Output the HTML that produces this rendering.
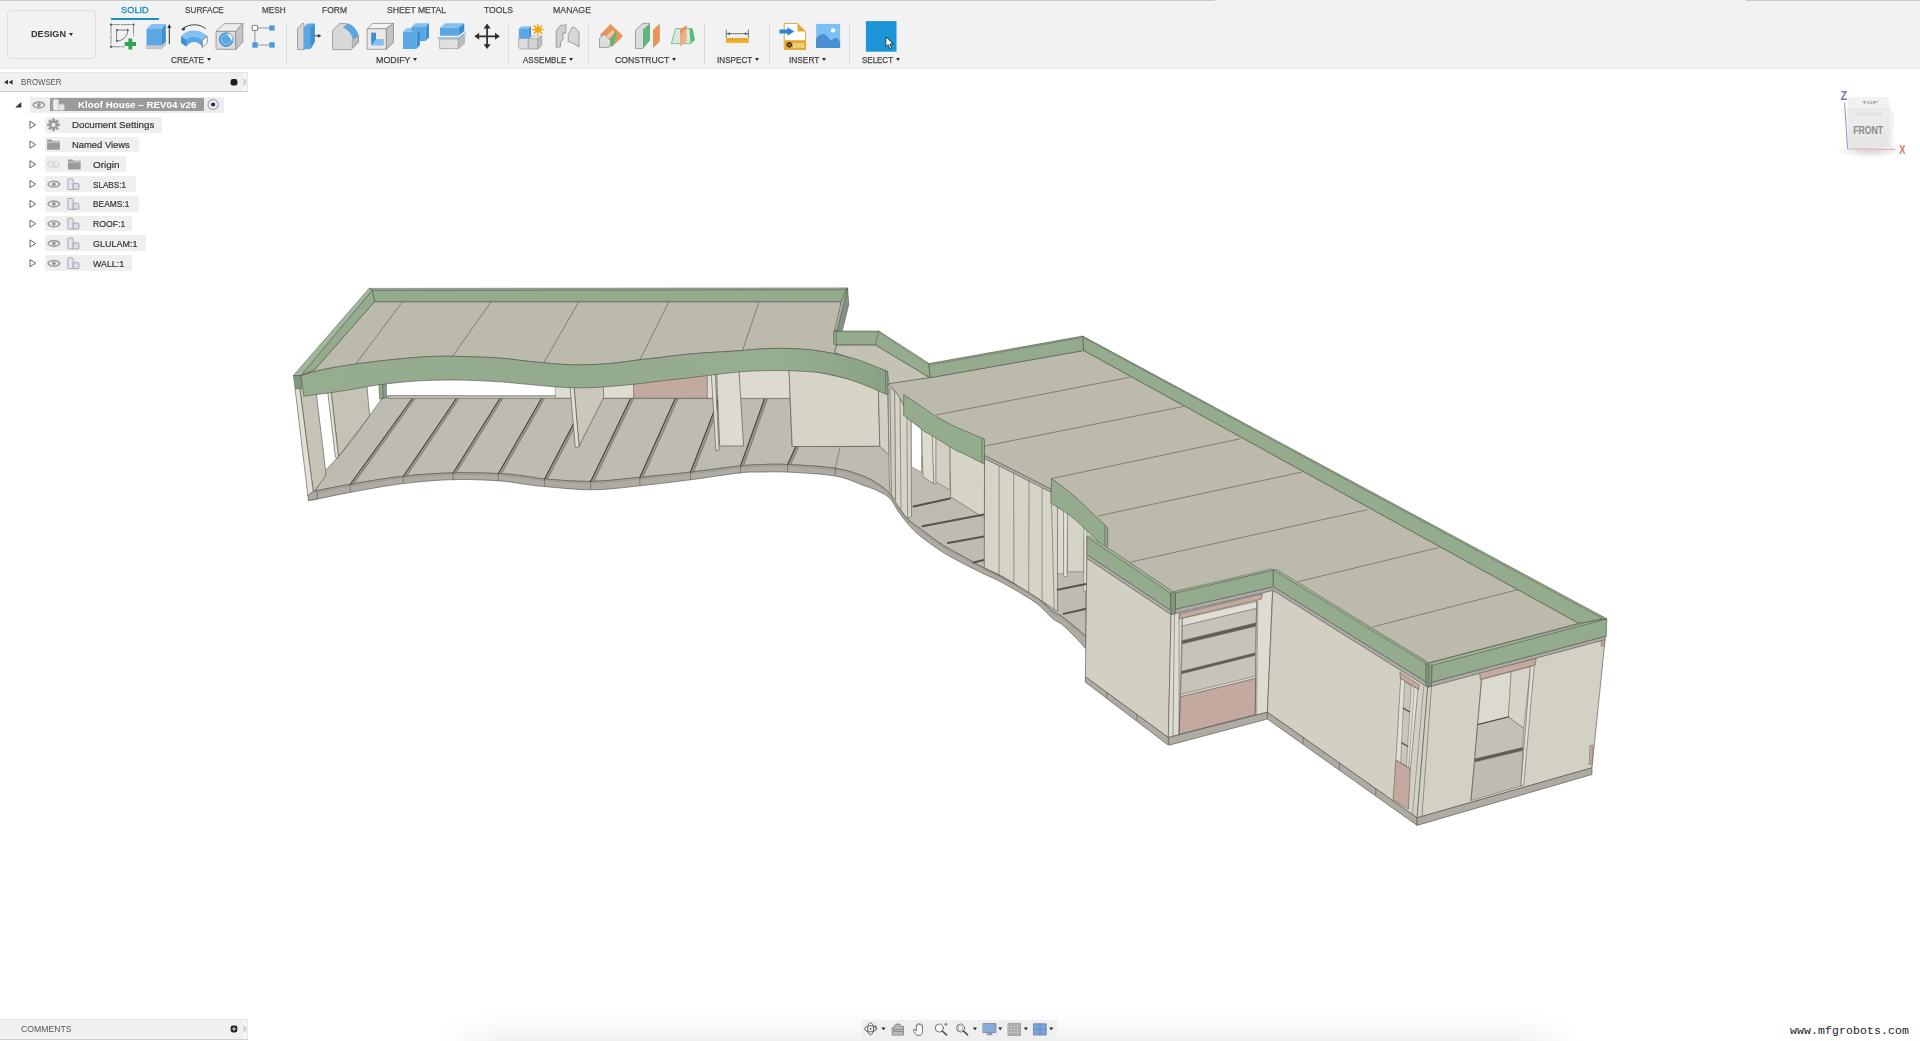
<!DOCTYPE html>
<html>
<head>
<meta charset="utf-8">
<title>Kloof House - Fusion 360</title>
<style>
*{box-sizing:border-box;margin:0;padding:0}
html,body{width:1920px;height:1041px;overflow:hidden;background:#fff;font-family:"Liberation Sans",sans-serif;color:#3c3c3c}
#app{position:relative;width:1920px;height:1041px;overflow:hidden;background:#fff}
.abs{position:absolute}
#topbar{left:0;top:0;width:1920px;height:69px;background:#f2f2f2;border-bottom:1px solid #ebebeb}
.topline{top:0;height:1px;background:#c9c9c9}
#design{left:7px;top:10px;width:89px;height:49px;border:1px solid #dedede;border-radius:4px;background:#f2f2f2}
.t{position:absolute;white-space:nowrap;line-height:1}
.sx{transform-origin:0 50%}
.tab{font-size:9.6px;color:#4a4a4a;top:5px;-webkit-text-stroke:0.25px #4a4a4a}
.grp{font-size:9.6px;color:#444;top:54.8px;-webkit-text-stroke:0.25px #444}
.sep{position:absolute;top:23px;width:1px;height:41px;background:#dadada}
.dd{position:absolute;width:0;height:0;border-left:2.2px solid transparent;border-right:2.2px solid transparent;border-top:3.2px solid #2a2a2a}
.arr{display:inline-block;width:0;height:0;border-left:2.5px solid transparent;border-right:2.5px solid transparent;border-top:3.5px solid #333;vertical-align:middle;margin-left:3px;position:relative;top:-1px}
#browserhdr{left:0;top:72px;width:247.6px;height:20px;background:#f0f0f0;border-bottom:1px solid #d0d0d0;border-top:1px solid #e6e6e6}
#commentsbar{left:0;top:1019px;width:247.6px;height:21px;background:#f0f0f0;border-bottom:1px solid #cfcfcf;border-top:1px solid #e6e6e6}
.row{position:absolute;height:17px;background:#efefef}
.rt{position:absolute;font-size:9.5px;color:#333;-webkit-text-stroke:0.2px #333;white-space:nowrap;line-height:1}
#navbar{left:862px;top:1020px;width:195px;height:20px;background:#efefef}
#wm{right:11px;top:1025px;font-family:"Liberation Mono",monospace;font-size:11.5px;color:#222;letter-spacing:0.1px}
svg{position:absolute;left:0;top:0;overflow:visible}
</style>
</head>
<body>
<div id="app">

<!-- ======= TOP TOOLBAR ======= -->
<div id="topbar" class="abs"></div>
<div class="abs topline" style="left:0;width:1215px"></div>
<div class="abs topline" style="left:1746px;width:174px"></div>
<div id="design" class="abs"></div>
<div class="t sx" style="transform:scaleX(0.9512);left:30.7px;top:29.3px;font-size:9.6px;font-weight:bold;color:#333">DESIGN</div>
<div class="dd" style="left:68.8px;top:33px"></div>

<div class="t tab sx" style="transform:scaleX(0.9654);left:120.7px;color:#1a8cc6;-webkit-text-stroke:0.3px #1a8cc6">SOLID</div>
<div class="abs" style="left:111px;top:17.5px;width:47.8px;height:2.3px;background:#1a8cc6"></div>
<div class="t tab sx" style="transform:scaleX(0.8563);left:185px">SURFACE</div>
<div class="t tab sx" style="transform:scaleX(0.8586);left:261.7px">MESH</div>
<div class="t tab sx" style="transform:scaleX(0.8850);left:322.2px">FORM</div>
<div class="t tab sx" style="transform:scaleX(0.8971);left:386.5px">SHEET METAL</div>
<div class="t tab sx" style="transform:scaleX(0.8962);left:484.2px">TOOLS</div>
<div class="t tab sx" style="transform:scaleX(0.9136);left:552.5px">MANAGE</div>

<div class="sep" style="left:286px"></div>
<div class="sep" style="left:508px"></div>
<div class="sep" style="left:588px"></div>
<div class="sep" style="left:704px"></div>
<div class="sep" style="left:769px"></div>
<div class="sep" style="left:849px"></div>

<div class="t grp sx" style="transform:scaleX(0.8638);left:170.7px">CREATE</div><div class="dd" style="left:207px;top:58px"></div>
<div class="t grp sx" style="transform:scaleX(0.9246);left:375.5px">MODIFY</div><div class="dd" style="left:412.5px;top:58px"></div>
<div class="t grp sx" style="transform:scaleX(0.8370);left:523px">ASSEMBLE</div><div class="dd" style="left:569.2px;top:58px"></div>
<div class="t grp sx" style="transform:scaleX(0.9015);left:614.5px">CONSTRUCT</div><div class="dd" style="left:671.6px;top:58px"></div>
<div class="t grp sx" style="transform:scaleX(0.8487);left:716.7px">INSPECT</div><div class="dd" style="left:755px;top:58px"></div>
<div class="t grp sx" style="transform:scaleX(0.8653);left:789px">INSERT</div><div class="dd" style="left:821.8px;top:58px"></div>
<div class="t grp sx" style="transform:scaleX(0.8305);left:862px">SELECT</div><div class="dd" style="left:895.6px;top:58px"></div>

<!-- TOOLBAR ICONS -->
<svg id="tbicons" width="1920" height="70" viewBox="0 0 1920 70">
<g stroke-linejoin="round" stroke-linecap="round">
<!-- 1 Create sketch -->
<g fill="none" stroke="#666" stroke-width="0.7">
<path d="M111,24.6 H133.5 M111,24.6 V46.8 M133.5,24.6 V36 M111,46.8 H124" stroke-dasharray="9 1.5"/>
<path d="M117,30 H127.8 C127.8,36 123,41 117,41 Z" stroke="#555" stroke-width="0.75"/>
</g>
<g fill="#555"><circle cx="111" cy="24.6" r="1.1"/><circle cx="133.5" cy="24.6" r="1.1"/><circle cx="111" cy="46.8" r="1.1"/><circle cx="117" cy="30" r="1"/><circle cx="127.8" cy="30" r="1"/><circle cx="117" cy="41" r="1"/></g>
<path d="M128.4,38.5 h3.8 v3.6 h3.8 v3.8 h-3.8 v3.7 h-3.8 v-3.7 h-3.7 v-3.8 h3.7 z" fill="#2da44e"/>
<!-- 2 Extrude -->
<polygon points="146.5,45.2 161.4,45.2 165.8,41.8 165.8,45 161.4,48.7 146.5,48.7" fill="#c9c9c9" stroke="#a8a8a8" stroke-width="0.5"/>
<polygon points="146.5,28.9 161.4,28.9 161.4,45.2 146.5,45.2" fill="#5aa7e3"/>
<polygon points="146.5,28.9 151.5,24 165.8,24 161.4,28.9" fill="#84c0f0"/>
<polygon points="161.4,28.9 165.8,24 165.8,41.8 161.4,45.2" fill="#3d8fd1"/>
<path d="M169.3,43.8 V26.5" stroke="#333" stroke-width="1" fill="none"/><polygon points="169.3,24 171.4,28 167.2,28" fill="#333"/>
<!-- 3 Revolve -->
<path d="M182.5,28.5 C190,23.5 199,23.5 205.3,28.3" fill="none" stroke="#333" stroke-width="0.9"/><polygon points="181,29.5 185.6,27 184.2,30.8" fill="#333"/>
<path d="M181.2,36.5 C187,29 199,29 207,36 L207.3,42.5 L202.5,47.3 C198,40.5 191,40.5 186.5,46.5 L181.2,43 Z" fill="#5aa7e3"/>
<path d="M181.2,36.5 C187,29 199,29 207,36 L202.3,40.8 C198,35.5 190,35.5 186.3,40 Z" fill="#84c0f0"/>
<path d="M181.2,36.5 L186.3,40 L186.5,46.5 L181.2,43 Z" fill="#3d8fd1"/>
<polygon points="202.3,40.8 207,36 207.3,42.5 202.5,47.3" fill="#fff" stroke="#666" stroke-width="0.7"/>
<!-- 4 Hole -->
<polygon points="216.5,31 236,31 236,49.3 216.5,49.3" fill="#dcdcdc" stroke="#8c8c8c" stroke-width="0.8"/>
<polygon points="216.5,31 224,23.6 242.8,23.6 236,31" fill="#ededed" stroke="#8c8c8c" stroke-width="0.8"/>
<polygon points="236,31 242.8,23.6 242.8,42 236,49.3" fill="#c4c4c4" stroke="#8c8c8c" stroke-width="0.8"/>
<circle cx="226.2" cy="39.6" r="6.8" fill="#5aa7e3" stroke="#3b82c4" stroke-width="0.9"/>
<circle cx="226.2" cy="39.6" r="5" fill="none" stroke="#9ccdf3" stroke-width="0.8"/>
<path d="M226.8,33.6 C230.8,33.8 233,36.8 232.6,41 C230.5,38.5 229,36.3 226.8,33.6 Z" fill="#fff"/>
<!-- 5 Pattern -->
<path d="M257.3,27.9 H269.2 M254.9,30.4 V42.2 M257.3,45 H269.2" stroke="#8a8a8a" stroke-width="0.9" fill="none"/>
<rect x="252.6" y="25.4" width="5" height="5" fill="#fff" stroke="#666" stroke-width="0.8"/>
<rect x="269.2" y="25.4" width="5.5" height="5.2" fill="#4f9cdc"/>
<rect x="252.3" y="42.2" width="5.5" height="5.5" fill="#4f9cdc"/>
<rect x="269.2" y="42.2" width="5.5" height="5.5" fill="#4f9cdc"/>
<!-- 6 Press pull -->
<path d="M297.6,49.2 V28.5 L302,23.6 H304 V49.2 Z" fill="#d6d6d6" stroke="#8c8c8c" stroke-width="0.8"/>
<path d="M303.8,49.2 V27.5 L307.5,23.6 H314.5 V41.5 L310,49.2 Z" fill="#5aa7e3"/>
<path d="M310.5,28 L314.8,23.6 V42 L310.5,49.2 Z" fill="#3d8fd1"/>
<path d="M314.8,35.8 H319" stroke="#333" stroke-width="0.9"/><polygon points="321.3,35.8 317.8,33.9 317.8,37.7" fill="#333"/>
<!-- 7 Fillet -->
<path d="M332.6,49.3 V30.5 L339.5,23.6 H345 C352,24.5 356,29 358.5,36 V42 L351.5,49.3 Z" fill="#d8d8d8" stroke="#8c8c8c" stroke-width="0.8"/>
<path d="M343,27.5 L347.5,23.4 C353,24.5 357,29.5 358.5,36 L352.8,39.5 C351.5,34 348.5,29.5 343,27.5 Z" fill="#5aa7e3"/>
<path d="M352.8,39.5 L358.5,36 V42 L352.5,47.5 Z" fill="#bdbdbd" stroke="#8c8c8c" stroke-width="0.6"/>
<!-- 8 Shell -->
<polygon points="367.5,28.5 386.5,28.5 386.5,49.3 367.5,49.3" fill="#e9e9e9" stroke="#8c8c8c" stroke-width="0.8"/>
<polygon points="367.5,28.5 372.5,23.4 393.5,23.4 386.5,28.5" fill="#f3f3f3" stroke="#8c8c8c" stroke-width="0.8"/>
<polygon points="386.5,28.5 393.5,23.4 393.5,42.5 386.5,49.3" fill="#c3c3c3" stroke="#8c8c8c" stroke-width="0.8"/>
<path d="M371.3,32.8 H376 V39 H383.8 V45.5 H371.3 Z" fill="#84c0f0"/>
<path d="M371.3,32.8 H376 V39 L371.3,45.5 Z" fill="#3d8fd1"/>
<!-- 9 Combine -->
<polygon points="403,31.8 416.5,31.8 416.5,49 403,49" fill="#5aa7e3"/>
<polygon points="403,31.8 406.5,28.2 420,28.2 416.5,31.8" fill="#84c0f0"/>
<polygon points="416.5,31.8 420,28.2 420,45 416.5,49" fill="#3d8fd1"/>
<polygon points="411.5,27 425.5,27 425.5,41 420,41 420,31.8 411.5,31.8" fill="#5aa7e3"/>
<polygon points="411.5,27 415,23.2 429,23.2 425.5,27" fill="#84c0f0"/>
<polygon points="425.5,27 429,23.2 429,37.2 425.5,41" fill="#3d8fd1"/>
<!-- 10 Split -->
<polygon points="440,39 458.5,39 458.5,48.6 440,48.6" fill="#e0e0e0" stroke="#9a9a9a" stroke-width="0.7"/>
<polygon points="458.5,39 464.3,35 464.3,43.5 458.5,48.6" fill="#bdbdbd" stroke="#9a9a9a" stroke-width="0.7"/>
<path d="M437.8,38 H459 L466,32.5" stroke="#4f9cdc" stroke-width="0.9" fill="none"/>
<polygon points="440,27.5 458.5,27.5 458.5,35.8 440,35.8" fill="#5aa7e3"/>
<polygon points="440,27.5 445.5,23.2 464.3,23.2 458.5,27.5" fill="#84c0f0"/>
<polygon points="458.5,27.5 464.3,23.2 464.3,31.2 458.5,35.8" fill="#3d8fd1"/>
<!-- 11 Move -->
<path d="M487.1,26 V46.5 M477,36.3 H497.3" stroke="#2f2f2f" stroke-width="1.7" fill="none"/>
<polygon points="487.1,23.5 490.6,28.4 483.6,28.4" fill="#2f2f2f"/><polygon points="487.1,49.1 490.6,44.2 483.6,44.2" fill="#2f2f2f"/>
<polygon points="474.3,36.3 479.2,32.8 479.2,39.8" fill="#2f2f2f"/><polygon points="499.9,36.3 495,32.8 495,39.8" fill="#2f2f2f"/>
<!-- 12 New component -->
<path d="M518.8,38.5 H528.5 V49 H521 C519.5,49 518.8,48 518.8,47 Z" fill="#dcdcdc" stroke="#9a9a9a" stroke-width="0.7"/>
<path d="M528.5,38.5 H538 V49 H528.5 Z" fill="#d2d2d2" stroke="#9a9a9a" stroke-width="0.7"/>
<path d="M528.5,38.5 L532,36 H541.8 L538,38.5 Z" fill="#ececec" stroke="#9a9a9a" stroke-width="0.6"/>
<path d="M538,38.5 L541.8,36 V45.5 L538,49 Z" fill="#bdbdbd" stroke="#9a9a9a" stroke-width="0.6"/>
<path d="M518.8,29 H528.5 V38.5 H518.8 Z" fill="#5aa7e3"/>
<path d="M518.8,29 L521.5,26.3 H531 L528.5,29 Z" fill="#84c0f0"/>
<path d="M528.5,29 L531,26.3 V36.5 L528.5,38.5 Z" fill="#3d8fd1"/>
<g stroke="#f5a100" stroke-width="1.3"><path d="M537.9,24.3 V34.7 M532.7,29.5 H543.1 M534.2,25.8 L541.6,33.2 M541.6,25.8 L534.2,33.2"/></g>
<circle cx="537.9" cy="29.5" r="2.9" fill="#f7a800"/>
<!-- 13 Joint -->
<path d="M556.2,46.8 V30.5 L560.5,25.5 H565.8 V33 H563 V39.5 L560.5,42.5 V46.8 L557.5,47.2 Z" fill="#cfcfcf" stroke="#8c8c8c" stroke-width="0.8"/>
<path d="M560.5,25.5 L563,24.8 H566.5 L565.8,26" fill="#e6e6e6" stroke="#8c8c8c" stroke-width="0.6"/>
<path d="M568.5,34 L572.5,27 L574.5,27.5 L579,31.5 V47 L573.5,43.5 L568.5,41.5 Z" fill="#d4d8dc" stroke="#8c8c8c" stroke-width="0.8"/>
<!-- 14 Offset plane -->
<polygon points="610.5,24 623,36 612,47 599.8,35" fill="#e8935a"/>
<polygon points="599.5,47 599.5,38.5 603.8,34 612,42 609,47" fill="#dcdcdc" stroke="#8c8c8c" stroke-width="0.8"/>
<polygon points="606,36.2 612.5,30 615,32.5 608.6,38.8" fill="#f1c9ab"/>
<polygon points="610,40 615.5,31 616.3,36.5 613,45 610,46.6" fill="#59b87a"/>
<!-- 15 plane at angle -->
<polygon points="635.5,48.2 635.5,30 643,23.3 649.5,23.3 649.5,40 643,48.2" fill="#dcdcdc" stroke="#8c8c8c" stroke-width="0.8"/>
<polygon points="643,29.5 649.8,23.5 649.8,40.5 643,48" fill="#59b87a"/>
<polygon points="653,30 659.8,23.5 659.8,41.5 653,48" fill="#e8935a"/>
<!-- 16 -->
<polygon points="671.5,43.3 675.5,28.5 692,28.5 694.5,40 691,43.3" fill="#dfe5df" stroke="#59b87a" stroke-width="0.8"/>
<polygon points="689.5,29 692.2,28.5 694.8,40 690.5,43" fill="#59b87a"/>
<polygon points="680,30 686.5,25.3 686.5,41.5 680,46.8" fill="#ecab7e" opacity="0.92"/>
<polygon points="680,30 686.5,25.3 686.5,29 680,34" fill="#e8935a"/>
<!-- 17 Measure -->
<rect x="725.9" y="38.2" width="22.9" height="4.8" fill="#f0b429"/>
<path d="M728,38.2 v1.8 M730.3,38.2 v1.8 M732.6,38.2 v1.8 M734.9,38.2 v1.8 M737.2,38.2 v1.8 M739.5,38.2 v1.8 M741.8,38.2 v1.8 M744.1,38.2 v1.8 M746.4,38.2 v1.8" stroke="#b27d10" stroke-width="0.6"/>
<path d="M726.3,30 V37.5 M748.4,30 V37.5 M727,33.7 H747.8" stroke="#555" stroke-width="0.8" fill="none"/>
<polygon points="726.8,33.7 730,32.3 730,35.1" fill="#555"/><polygon points="748,33.7 744.8,32.3 744.8,35.1" fill="#555"/>
<!-- 18 Insert SVG -->
<path d="M784.6,23.4 H797.5 L805.6,31.5 V49.4 H784.6 Z" fill="#fff" stroke="#c9962a" stroke-width="0.8"/>
<polygon points="797.5,23.4 805.6,31.5 797.5,31.5" fill="#e3a82c"/>
<rect x="784.6" y="40.2" width="21" height="9.2" fill="#e3a82c"/>
<circle cx="789.3" cy="44.8" r="2.7" fill="#3a2a08"/><path d="M788.1,43.6 l2.4,2.4 m0,-2.4 l-2.4,2.4" stroke="#e3a82c" stroke-width="0.8"/>
<text x="793" y="47.6" font-family="Liberation Sans, sans-serif" font-weight="bold" font-size="6.6" fill="#fff2cc" textLength="11.5" lengthAdjust="spacingAndGlyphs">SVG</text>
<path d="M779.5,29.6 H787.5 V27.3 L794.3,31.5 L787.5,35.7 V33.4 H779.5 Z" fill="#2c86d3"/>
<!-- 19 Image -->
<rect x="816.1" y="23.9" width="24" height="24" fill="#7cc0f3"/>
<path d="M816.1,47.9 V38.5 C819,35 822,33.5 824.5,34.3 C827,35.3 829,39 831,40.5 C833,39.5 834.5,37.5 836,37.8 C837.8,38.2 839,40.5 840.1,42.5 V47.9 Z" fill="#4a90d0"/>
<circle cx="833" cy="30.4" r="2.2" fill="#fff"/>
<!-- 20 Select -->
<rect x="865.9" y="21.1" width="30.6" height="30.6" fill="#1b95d7"/>
<path d="M885.9,37.3 L885.9,46.8 L888.2,44.6 L889.9,48.6 L891.6,47.9 L889.9,44 L893,43.8 Z" fill="#fff" stroke="#222" stroke-width="0.8"/>
</g>

</svg>

<!-- ======= BROWSER ======= -->
<div id="browserhdr" class="abs"></div>
<div class="t sx" style="transform:scaleX(0.8707);left:20.8px;top:77.6px;font-size:9px;color:#555">BROWSER</div>
<div id="tree">
<div class="row" style="left:30px;top:96.5px;width:194px;height:16px;background:#ededed"></div>
<div class="row" style="left:50.3px;top:98.2px;width:153.3px;height:13px;background:#9b9b9b"></div>
<div class="row" style="left:44.9px;top:116.8px;width:116.8px;height:15.8px"></div>
<div class="row" style="left:44.9px;top:136.5px;width:94.1px;height:15.8px"></div>
<div class="row" style="left:44.9px;top:156.3px;width:80.9px;height:15.8px"></div>
<div class="row" style="left:44.9px;top:176.1px;width:91.1px;height:15.8px"></div>
<div class="row" style="left:44.9px;top:195.9px;width:94.3px;height:15.8px"></div>
<div class="row" style="left:44.9px;top:215.7px;width:87.6px;height:15.8px"></div>
<div class="row" style="left:44.9px;top:235.4px;width:100.7px;height:15.8px"></div>
<div class="row" style="left:44.9px;top:255.2px;width:87.6px;height:15.8px"></div>
<div class="rt sx" style="transform:scaleX(1.0423);left:78.1px;top:100.3px;font-weight:bold;color:#fff;font-size:9.4px;-webkit-text-stroke:0">Kloof House – REV04 v26</div>
<div class="rt sx" style="transform:scaleX(1.0253);left:72.2px;top:120.1px">Document Settings</div>
<div class="rt sx" style="transform:scaleX(0.9891);left:72.2px;top:139.9px">Named Views</div>
<div class="rt sx" style="transform:scaleX(1.0417);left:92.8px;top:159.7px">Origin</div>
<div class="rt sx" style="transform:scaleX(0.8558);left:92.8px;top:179.5px">SLABS:1</div>
<div class="rt sx" style="transform:scaleX(0.8813);left:92.8px;top:199.3px">BEAMS:1</div>
<div class="rt sx" style="transform:scaleX(0.9102);left:92.8px;top:219.1px">ROOF:1</div>
<div class="rt sx" style="transform:scaleX(0.9447);left:92.8px;top:238.8px">GLULAM:1</div>
<div class="rt sx" style="transform:scaleX(0.9326);left:92.8px;top:258.6px">WALL:1</div>
<svg width="260" height="290" viewBox="0 0 260 290">
<defs>
<g id="eye"><path d="M-6,0 C-3.5,-4 3.5,-4 6,0 C3.5,4 -3.5,4 -6,0 Z" fill="none" stroke="#9a9a9a" stroke-width="1.3"/><circle r="1.9" fill="#9a9a9a"/></g>
<g id="comp"><path d="M-5,-5.4 h3.2 q1,0 1,1 v9.8 h-4.6 q-0.8,0 -0.8,-0.8 v-9 q0,-1 1.2,-1 z" fill="#e4e4ea" stroke="#9a9aa6" stroke-width="0.8"/><path d="M-0.8,-0.6 h4.6 q1.2,0 1.2,1.2 v3.8 q0,1 -1,1 h-4.8 z" fill="#dcdce4" stroke="#9a9aa6" stroke-width="0.8"/></g>
<g id="tri"><path d="M-2.6,-3.6 L3,0 L-2.6,3.6 Z" fill="#fff" stroke="#555" stroke-width="0.9" stroke-linejoin="round"/></g>
<g id="folder"><path d="M-6.4,-5 h4.6 l1,1.4 h7.2 v8.7 h-12.8 z" fill="#9a9a9a"/><path d="M-6.4,-2.4 h12.8" stroke="#efefef" stroke-width="0.7"/></g>
</defs>
<path d="M15.2,107.4 L21.3,107.4 L21.3,102 Z" fill="#333"/>
<use href="#eye" x="38.9" y="105"/>
<g transform="translate(59.3,104.8)"><path d="M-5,-5.4 h3.2 q1,0 1,1 v9.8 h-4.6 q-0.8,0 -0.8,-0.8 v-9 q0,-1 1.2,-1 z" fill="#ececf0" stroke="#c6c6ce" stroke-width="0.7"/><path d="M-0.8,-0.6 h4.6 q1.2,0 1.2,1.2 v3.8 q0,1 -1,1 h-4.8 z" fill="#e4e4ea" stroke="#c6c6ce" stroke-width="0.7"/></g>
<circle cx="213.1" cy="104.5" r="5" fill="#f2f3f8" stroke="#aeb2c2" stroke-width="1.5"/><circle cx="213.1" cy="104.5" r="2.1" fill="#2b2f45"/>
<use href="#tri" x="32.6" y="124.8"/><use href="#tri" x="32.6" y="144.6"/><use href="#tri" x="32.6" y="164.3"/><use href="#tri" x="32.6" y="184.1"/><use href="#tri" x="32.6" y="203.9"/><use href="#tri" x="32.6" y="223.7"/><use href="#tri" x="32.6" y="243.5"/><use href="#tri" x="32.6" y="263.2"/>
<!-- gear -->
<g transform="translate(53.5,124.8)" fill="#9a9a9a"><circle r="4.3"/><g><rect x="-1.3" y="-6.4" width="2.6" height="12.8"/><rect x="-1.3" y="-6.4" width="2.6" height="12.8" transform="rotate(45)"/><rect x="-1.3" y="-6.4" width="2.6" height="12.8" transform="rotate(90)"/><rect x="-1.3" y="-6.4" width="2.6" height="12.8" transform="rotate(135)"/></g><circle r="2.1" fill="#efefef"/></g>
<use href="#folder" x="53.5" y="144.6"/>
<g opacity="0.28"><use href="#eye" x="53.4" y="164.3"/><path d="M48.5,160.3 L58.5,168.3" stroke="#9a9a9a" stroke-width="1"/></g>
<use href="#folder" x="74.3" y="164.4"/>
<use href="#eye" x="53.9" y="184.2"/><use href="#comp" x="74" y="184.1"/>
<use href="#eye" x="53.9" y="204"/><use href="#comp" x="74" y="203.9"/>
<use href="#eye" x="53.9" y="223.8"/><use href="#comp" x="74" y="223.7"/>
<use href="#eye" x="53.9" y="243.5"/><use href="#comp" x="74" y="243.5"/>
<use href="#eye" x="53.9" y="263.3"/><use href="#comp" x="74" y="263.2"/>
<!-- header icons -->
<path d="M8,79.8 L4,82.2 L8,84.6 Z M12.6,79.8 L8.6,82.2 L12.6,84.6 Z" fill="#333"/>
<rect x="230.6" y="79" width="6.8" height="6.4" rx="2.2" fill="#1e1e1e"/>
<rect x="243.2" y="73" width="4" height="18" fill="#f6f6f6"/><path d="M243.6,77.5 L246.6,82 L243.6,86.5 Z" fill="#c9c9c9"/><path d="M247.2,73 V91" stroke="#dcdcdc" stroke-width="0.6"/>
</svg>

</div>

<!-- ======= MODEL ======= -->
<svg id="model" width="1920" height="1041" viewBox="0 0 1920 1041">
<path d="M382,398.5 L387.9,396 L790,398.4 L792.2,446.5 L879.8,446.3 L889.8,440 L1086,540 L1086,636.5 C1084.2,634.9 1079.0,630.3 1075.0,627.0 C1071.0,623.7 1065.8,619.2 1062.0,616.5 C1058.2,613.8 1057.0,614.4 1052.5,611.0 C1048.0,607.6 1043.3,601.8 1035.0,596.2 C1026.7,590.7 1011.0,582.2 1002.5,577.5 C994.0,572.8 990.2,571.3 984.0,568.0 C977.8,564.7 972.1,561.5 965.3,557.7 C958.5,553.9 950.4,550.0 943.0,545.2 C935.6,540.4 926.7,533.5 920.7,529.0 C914.7,524.5 910.7,522.1 906.9,518.3 C903.1,514.5 900.8,510.1 898.0,506.0 C895.2,501.9 893.3,497.4 890.0,493.7 C886.7,490.0 882.5,486.9 878.0,484.0 C873.5,481.1 870.0,478.6 862.9,476.0 C855.8,473.4 847.8,470.2 835.3,468.3 C822.8,466.4 800.1,465.1 787.6,464.5 C775.1,463.9 768.0,464.4 760.0,464.6 C752.0,464.9 751.3,464.8 739.7,466.0 C728.1,467.2 707.4,470.2 690.5,472.1 C673.6,474.0 654.7,475.9 638.3,477.5 C621.9,479.1 607.6,481.1 592.2,481.4 C576.8,481.7 557.3,480.0 546.1,479.1 C534.9,478.2 532.7,477.1 525.0,476.2 C517.3,475.3 512.0,474.2 500.0,473.6 C488.0,473.1 469.2,472.5 453.1,472.9 C437.0,473.3 420.5,474.3 403.3,476.2 C386.1,478.1 364.9,481.8 350.2,484.3 C335.5,486.8 321.1,489.9 315.3,491.0 L325.6,470.6 L339.3,455.6 L352.3,440 L369.6,415.7 Z" fill="#bebbb0" stroke="#4f4f48" stroke-width="0.6"/>
<path d="M315.3,491.0 C321.1,489.9 335.5,486.8 350.2,484.3 C364.9,481.8 386.1,478.1 403.3,476.2 C420.5,474.3 437.0,473.3 453.1,472.9 C469.2,472.5 488.0,473.1 500.0,473.6 C512.0,474.2 517.3,475.3 525.0,476.2 C532.7,477.1 534.9,478.2 546.1,479.1 C557.3,480.0 576.8,481.7 592.2,481.4 C607.6,481.1 621.9,479.1 638.3,477.5 C654.7,475.9 673.6,474.0 690.5,472.1 C707.4,470.2 728.1,467.2 739.7,466.0 C751.3,464.8 752.0,464.9 760.0,464.6 C768.0,464.4 775.1,463.9 787.6,464.5 C800.1,465.1 822.8,466.4 835.3,468.3 C847.8,470.2 855.8,473.4 862.9,476.0 C870.0,478.6 873.5,481.1 878.0,484.0 C882.5,486.9 886.7,490.0 890.0,493.7 C893.3,497.4 895.2,501.9 898.0,506.0 C900.8,510.1 903.1,514.5 906.9,518.3 C910.7,522.1 914.7,524.5 920.7,529.0 C926.7,533.5 935.6,540.4 943.0,545.2 C950.4,550.0 958.5,553.9 965.3,557.7 C972.1,561.5 977.8,564.7 984.0,568.0 C990.2,571.3 994.0,572.8 1002.5,577.5 C1011.0,582.2 1026.7,590.7 1035.0,596.2 C1043.3,601.8 1048.0,607.6 1052.5,611.0 C1057.0,614.4 1058.2,613.8 1062.0,616.5 C1065.8,619.2 1071.0,623.7 1075.0,627.0 C1079.0,630.3 1084.2,634.9 1086.0,636.5 L1086.0,649.0 C1084.2,647.0 1079.0,641.1 1075.0,637.0 C1071.0,632.9 1065.8,627.6 1062.0,624.5 C1058.2,621.4 1056.9,622.2 1052.5,618.5 C1048.1,614.8 1043.5,608.3 1035.4,602.5 C1027.3,596.7 1012.5,588.3 1003.8,583.5 C995.1,578.7 989.5,576.7 983.0,573.5 C976.5,570.3 971.8,568.1 965.0,564.5 C958.2,560.9 950.0,556.9 942.4,552.0 C934.8,547.1 925.0,540.0 919.2,535.2 C913.4,530.5 911.0,527.5 907.5,523.5 C904.0,519.5 900.9,515.2 898.0,511.0 C895.1,506.8 893.3,501.8 890.0,498.5 C886.7,495.2 882.5,493.2 878.0,491.0 C873.5,488.8 870.0,487.7 862.9,485.2 C855.8,482.7 847.8,478.2 835.3,476.0 C822.8,473.8 800.1,472.8 787.6,472.1 C775.1,471.5 768.0,472.0 760.0,472.1 C752.0,472.2 751.3,471.6 739.7,472.9 C728.1,474.2 707.4,477.6 690.5,479.8 C673.6,482.0 654.7,484.3 638.3,486.0 C621.9,487.7 607.6,489.7 592.2,489.8 C576.8,489.9 557.3,487.6 546.1,486.7 C534.9,485.8 532.7,485.3 525.0,484.3 C517.3,483.3 512.0,481.7 500.0,480.9 C488.0,480.1 469.2,479.2 453.1,479.6 C437.0,480.1 420.5,481.5 403.3,483.6 C386.1,485.7 364.5,489.8 350.2,492.4 C335.9,495.0 324.2,497.7 317.3,499.0 C310.4,500.3 310.0,500.2 308.5,500.4 Z" fill="#adaba3" stroke="#4f4f48" stroke-width="0.6" stroke-linejoin="round" />
<path d="M315.3,492.6 C321.1,491.5 335.5,488.4 350.2,485.9 C364.9,483.4 386.1,479.7 403.3,477.8 C420.5,475.9 437.0,474.9 453.1,474.5 C469.2,474.1 488.0,474.7 500.0,475.2 C512.0,475.8 517.3,476.9 525.0,477.8 C532.7,478.7 534.9,479.8 546.1,480.7 C557.3,481.6 576.8,483.3 592.2,483.0 C607.6,482.7 621.9,480.7 638.3,479.1 C654.7,477.6 673.6,475.6 690.5,473.7 C707.4,471.8 728.1,468.9 739.7,467.6 C751.3,466.4 752.0,466.5 760.0,466.2 C768.0,466.0 775.1,465.5 787.6,466.1 C800.1,466.7 822.8,468.0 835.3,469.9 C847.8,471.8 855.8,475.0 862.9,477.6 C870.0,480.2 873.5,482.7 878.0,485.6 C882.5,488.6 886.7,491.6 890.0,495.3 C893.3,499.0 895.2,503.5 898.0,507.6 C900.8,511.7 903.1,516.1 906.9,519.9 C910.7,523.7 914.7,526.1 920.7,530.6 C926.7,535.1 935.6,542.0 943.0,546.8 C950.4,551.6 958.5,555.5 965.3,559.3 C972.1,563.1 977.8,566.3 984.0,569.6 C990.2,572.9 994.0,574.4 1002.5,579.1 C1011.0,583.8 1026.7,592.3 1035.0,597.9 C1043.3,603.4 1048.0,609.2 1052.5,612.6 C1057.0,616.0 1058.2,615.4 1062.0,618.1 C1065.8,620.8 1071.0,625.3 1075.0,628.6 C1079.0,631.9 1084.2,636.5 1086.0,638.1" fill="none" stroke="#8a8980" stroke-width="0.5"/>
<polygon points="307.9,494.4 315.3,491.0 317.3,493.0 317.3,499.0 308.5,500.4" fill="#adaba3" stroke="#4f4f48" stroke-width="0.6" stroke-linejoin="round" />
<polygon points="414.1,396.0 417.1,396.0 353.2,484.5 350.2,484.3" fill="#96948b" stroke="#5c5b54" stroke-width="0.5" stroke-linejoin="round" />
<polyline points="414.1,396.0 350.2,484.3" fill="none" stroke="#3f3f39" stroke-width="1.0" stroke-linecap="round" stroke-linejoin="round" />
<polyline points="350.2,484.3 350.2,491.6" fill="none" stroke="#4f4f48" stroke-width="0.5" stroke-linecap="round" stroke-linejoin="round" />
<polygon points="457.8,396.2 460.8,396.2 406.3,476.4 403.3,476.2" fill="#96948b" stroke="#5c5b54" stroke-width="0.5" stroke-linejoin="round" />
<polyline points="457.8,396.2 403.3,476.2" fill="none" stroke="#3f3f39" stroke-width="1.0" stroke-linecap="round" stroke-linejoin="round" />
<polyline points="403.3,476.2 403.3,483.5" fill="none" stroke="#4f4f48" stroke-width="0.5" stroke-linecap="round" stroke-linejoin="round" />
<polygon points="500.8,396.9 503.8,396.9 456.1,473.1 453.1,472.9" fill="#96948b" stroke="#5c5b54" stroke-width="0.5" stroke-linejoin="round" />
<polyline points="500.8,396.9 453.1,472.9" fill="none" stroke="#3f3f39" stroke-width="1.0" stroke-linecap="round" stroke-linejoin="round" />
<polyline points="453.1,472.9 453.1,480.2" fill="none" stroke="#4f4f48" stroke-width="0.5" stroke-linecap="round" stroke-linejoin="round" />
<polygon points="541.5,398.4 544.5,398.4 501.3,473.8 498.3,473.6" fill="#96948b" stroke="#5c5b54" stroke-width="0.5" stroke-linejoin="round" />
<polyline points="541.5,398.4 498.3,473.6" fill="none" stroke="#3f3f39" stroke-width="1.0" stroke-linecap="round" stroke-linejoin="round" />
<polyline points="498.3,473.6 498.3,480.9" fill="none" stroke="#4f4f48" stroke-width="0.5" stroke-linecap="round" stroke-linejoin="round" />
<polygon points="587.0,398.0 590.0,398.0 547.6,479.0 544.6,478.8" fill="#96948b" stroke="#5c5b54" stroke-width="0.5" stroke-linejoin="round" />
<polyline points="587.0,398.0 544.6,478.8" fill="none" stroke="#3f3f39" stroke-width="1.0" stroke-linecap="round" stroke-linejoin="round" />
<polyline points="544.6,478.8 544.6,486.1" fill="none" stroke="#4f4f48" stroke-width="0.5" stroke-linecap="round" stroke-linejoin="round" />
<polygon points="630.6,398.4 633.6,398.4 593.7,481.6 590.7,481.4" fill="#96948b" stroke="#5c5b54" stroke-width="0.5" stroke-linejoin="round" />
<polyline points="630.6,398.4 590.7,481.4" fill="none" stroke="#3f3f39" stroke-width="1.0" stroke-linecap="round" stroke-linejoin="round" />
<polyline points="590.7,481.4 590.7,488.7" fill="none" stroke="#4f4f48" stroke-width="0.5" stroke-linecap="round" stroke-linejoin="round" />
<polygon points="675.2,398.4 678.2,398.4 642.8,477.6 639.8,477.4" fill="#96948b" stroke="#5c5b54" stroke-width="0.5" stroke-linejoin="round" />
<polyline points="675.2,398.4 639.8,477.4" fill="none" stroke="#3f3f39" stroke-width="1.0" stroke-linecap="round" stroke-linejoin="round" />
<polyline points="639.8,477.4 639.8,484.7" fill="none" stroke="#4f4f48" stroke-width="0.5" stroke-linecap="round" stroke-linejoin="round" />
<polygon points="719.1,398.0 722.1,398.0 693.5,472.3 690.5,472.1" fill="#96948b" stroke="#5c5b54" stroke-width="0.5" stroke-linejoin="round" />
<polyline points="719.1,398.0 690.5,472.1" fill="none" stroke="#3f3f39" stroke-width="1.0" stroke-linecap="round" stroke-linejoin="round" />
<polyline points="690.5,472.1 690.5,479.4" fill="none" stroke="#4f4f48" stroke-width="0.5" stroke-linecap="round" stroke-linejoin="round" />
<polygon points="764.6,398.4 767.6,398.4 743.5,466.2 740.5,466.0" fill="#96948b" stroke="#5c5b54" stroke-width="0.5" stroke-linejoin="round" />
<polyline points="764.6,398.4 740.5,466.0" fill="none" stroke="#3f3f39" stroke-width="1.0" stroke-linecap="round" stroke-linejoin="round" />
<polyline points="740.5,466.0 740.5,473.3" fill="none" stroke="#4f4f48" stroke-width="0.5" stroke-linecap="round" stroke-linejoin="round" />
<polygon points="795.8,446.5 798.8,446.5 790.6,464.7 787.6,464.5" fill="#96948b" stroke="#5c5b54" stroke-width="0.5" stroke-linejoin="round" />
<polyline points="795.8,446.5 787.6,464.5" fill="none" stroke="#3f3f39" stroke-width="1.0" stroke-linecap="round" stroke-linejoin="round" />
<polyline points="787.6,464.5 787.6,471.8" fill="none" stroke="#4f4f48" stroke-width="0.5" stroke-linecap="round" stroke-linejoin="round" />
<polyline points="839.9,447.6 835.3,468.3 835.3,476.0" fill="none" stroke="#4f4f48" stroke-width="0.5" stroke-linecap="round" stroke-linejoin="round" />
<polygon points="387.9,395.5 790.0,395.5 790.0,398.6 387.9,398.6" fill="#bbb9ae" stroke="#4f4f48" stroke-width="0.4" stroke-linejoin="round" />
<polygon points="555.3,378.0 633.7,378.0 633.7,398.1 555.3,398.1" fill="#deddd1" stroke="#4f4f48" stroke-width="0.4" stroke-linejoin="round" />
<polygon points="633.7,376.0 707.4,372.0 707.4,398.1 633.7,398.1" fill="#c3a9a0" stroke="#4f4f48" stroke-width="0.4" stroke-linejoin="round" />
<polygon points="707.4,372.0 716.7,372.0 716.7,398.1 707.4,398.1" fill="#e2e0d5" stroke="#4f4f48" stroke-width="0.4" stroke-linejoin="round" />
<polygon points="738.9,368.0 789.2,368.0 790.0,398.4 738.9,398.4" fill="#dddbcf" stroke="#4f4f48" stroke-width="0.5" stroke-linejoin="round" />
<polygon points="788.8,366.0 878.3,385.0 879.8,446.3 792.2,446.5" fill="#d6d3c7" stroke="#4f4f48" stroke-width="0.6" stroke-linejoin="round" />
<polygon points="878.3,385.0 887.5,390.0 889.3,455.5 879.8,446.3" fill="#d2cfc3" stroke="#4f4f48" stroke-width="0.6" stroke-linejoin="round" />
<polygon points="299.8,388.0 315.9,390.0 325.6,470.6 325.6,475.6 315.0,490.5 313.2,491.0" fill="#c6c3b7" stroke="#4f4f48" stroke-width="0.6" stroke-linejoin="round" />
<polygon points="295.1,388.8 299.8,388.8 313.2,491.0 307.9,495.7" fill="#e2e0d5" stroke="#4f4f48" stroke-width="0.6" stroke-linejoin="round" />
<polygon points="330.7,388.0 366.7,383.0 369.6,415.7 338.6,456.5" fill="#c5c2b6" stroke="#4f4f48" stroke-width="0.6" stroke-linejoin="round" />
<polygon points="327.4,389.0 330.7,388.0 338.6,458.0 335.4,457.4" fill="#e2e0d5" stroke="#4f4f48" stroke-width="0.6" stroke-linejoin="round" />
<polygon points="378.8,382.0 382.6,382.0 382.8,399.0 379.6,399.0" fill="#8fa98a" stroke="#4f4f48" stroke-width="0.5" stroke-linejoin="round" />
<polygon points="382.9,382.0 386.3,382.0 386.5,397.9 383.2,398.3" fill="#86a082" stroke="#4f4f48" stroke-width="0.5" stroke-linejoin="round" />
<polygon points="573.8,385.0 603.3,385.0 603.7,397.6 579.1,446.0" fill="#cac7bb" stroke="#4f4f48" stroke-width="0.6" stroke-linejoin="round" />
<polygon points="569.9,385.0 573.8,385.0 579.1,446.8 575.3,447.6" fill="#e2e0d5" stroke="#4f4f48" stroke-width="0.6" stroke-linejoin="round" />
<polygon points="716.7,372.0 738.9,370.0 743.6,446.0 719.7,446.0" fill="#dddbcf" stroke="#4f4f48" stroke-width="0.6" stroke-linejoin="round" />
<polygon points="711.3,373.0 715.1,373.0 719.0,450.0 715.9,450.9" fill="#e2e0d5" stroke="#4f4f48" stroke-width="0.6" stroke-linejoin="round" />
<path d="M374.5,301.7 L841.3,301.7 L836.7,345.5 L834.4,352.4 L887.5,371.5 C884.8,370.4 875.6,366.4 871.0,364.6 C866.4,362.8 863.8,361.8 860.0,360.5 C856.2,359.2 852.5,358.1 848.0,356.9 C843.5,355.7 838.2,354.5 833.0,353.5 C827.8,352.5 822.5,351.4 817.0,350.7 C811.5,349.9 806.5,349.4 800.0,349.0 C793.5,348.6 784.7,348.4 778.0,348.4 C771.3,348.4 766.3,348.6 760.0,349.0 C753.7,349.4 748.3,350.1 740.0,350.7 C731.7,351.3 719.3,351.9 710.0,352.5 C700.7,353.1 692.3,353.8 684.0,354.6 C675.7,355.4 667.7,356.6 660.0,357.5 C652.3,358.4 645.5,359.1 638.0,360.0 C630.5,360.9 622.7,362.2 615.0,363.0 C607.3,363.8 599.5,364.3 592.0,364.6 C584.5,364.9 577.7,365.1 570.0,364.8 C562.3,364.5 552.7,363.6 546.0,363.0 C539.3,362.4 537.7,362.3 530.0,361.5 C522.3,360.7 510.0,358.9 500.0,358.1 C490.0,357.3 479.2,357.1 470.0,356.8 C460.8,356.5 453.7,356.1 445.0,356.2 C436.3,356.3 430.0,356.4 418.0,357.3 C406.0,358.2 387.8,360.0 373.0,361.8 C358.2,363.6 341.0,366.1 329.0,368.4 C317.0,370.7 305.7,374.3 301.0,375.5 L314.8,369.5 Z" fill="#bcb9ad" stroke="#4f4f48" stroke-width="0.6"/>
<polyline points="402.5,301.7 355.0,365.0" fill="none" stroke="#4f4f48" stroke-width="0.55" stroke-linecap="round" stroke-linejoin="round" />
<polyline points="491.2,301.7 452.5,356.3" fill="none" stroke="#4f4f48" stroke-width="0.55" stroke-linecap="round" stroke-linejoin="round" />
<polyline points="578.8,301.7 543.8,362.7" fill="none" stroke="#4f4f48" stroke-width="0.55" stroke-linecap="round" stroke-linejoin="round" />
<polyline points="668.8,301.7 640.0,359.8" fill="none" stroke="#4f4f48" stroke-width="0.55" stroke-linecap="round" stroke-linejoin="round" />
<polyline points="759.0,301.7 742.5,350.6" fill="none" stroke="#4f4f48" stroke-width="0.55" stroke-linecap="round" stroke-linejoin="round" />
<polygon points="372.3,290.0 846.5,289.5 841.3,301.7 374.5,301.7" fill="#94ac8d" stroke="#4f4f48" stroke-width="0.6" stroke-linejoin="round" />
<polygon points="369.0,288.4 847.6,287.9 846.5,289.7 372.3,290.2" fill="#a0b79a" stroke="#4f4f48" stroke-width="0.5" stroke-linejoin="round" />
<polygon points="372.3,290.0 374.5,301.7 314.8,369.5 300.9,375.5" fill="#94ac8d" stroke="#4f4f48" stroke-width="0.6" stroke-linejoin="round" />
<polygon points="369.0,288.4 372.3,290.0 300.9,375.5 293.4,375.5" fill="#a0b79a" stroke="#4f4f48" stroke-width="0.5" stroke-linejoin="round" />
<polygon points="293.4,375.5 301.0,375.5 302.0,387.5 295.1,388.8" fill="#7f977a" stroke="#4f4f48" stroke-width="0.5" stroke-linejoin="round" />
<polygon points="847.6,287.9 848.8,304.6 842.4,330.5 837.0,330.5" fill="#8d8c84" stroke="#4f4f48" stroke-width="0.5" stroke-linejoin="round" />
<polygon points="846.5,289.5 847.6,287.9 837.0,330.5 834.4,330.5 841.3,301.7" fill="#a0b79a" stroke="#4f4f48" stroke-width="0.5" stroke-linejoin="round" />
<polygon points="836.7,345.5 875.3,344.9 930.0,377.8 889.1,384.1 887.4,371.4 834.4,352.4" fill="#c4c1b5" stroke="#4f4f48" stroke-width="0.6" stroke-linejoin="round" />
<polygon points="833.8,331.1 878.8,331.1 928.9,363.4 930.0,377.8 875.3,344.9 833.8,344.4" fill="#94ac8d" stroke="#4f4f48" stroke-width="0.6" stroke-linejoin="round" />
<polyline points="878.8,331.1 875.3,344.9" fill="none" stroke="#4f4f48" stroke-width="0.5" stroke-linecap="round" stroke-linejoin="round" />
<polyline points="836.2,331.1 836.5,344.6" fill="none" stroke="#4f4f48" stroke-width="0.5" stroke-linecap="round" stroke-linejoin="round" />
<polyline points="834.5,332.3 878.3,332.3 928.7,364.8" fill="none" stroke="#6f8a6a" stroke-width="0.4" stroke-linecap="round" stroke-linejoin="round" />
<defs><linearGradient id="gp" x1="0" x2="1" y1="0" y2="0"><stop offset="0" stop-color="#96ae8f"/><stop offset="0.45" stop-color="#93ab8c"/><stop offset="0.8" stop-color="#97af90"/><stop offset="1" stop-color="#8aa284"/></linearGradient></defs>
<path d="M301.0,375.5 C305.7,374.3 317.0,370.7 329.0,368.4 C341.0,366.1 358.2,363.6 373.0,361.8 C387.8,360.0 406.0,358.2 418.0,357.3 C430.0,356.4 436.3,356.3 445.0,356.2 C453.7,356.1 460.8,356.5 470.0,356.8 C479.2,357.1 490.0,357.3 500.0,358.1 C510.0,358.9 522.3,360.7 530.0,361.5 C537.7,362.3 539.3,362.4 546.0,363.0 C552.7,363.6 562.3,364.5 570.0,364.8 C577.7,365.1 584.5,364.9 592.0,364.6 C599.5,364.3 607.3,363.8 615.0,363.0 C622.7,362.2 630.5,360.9 638.0,360.0 C645.5,359.1 652.3,358.4 660.0,357.5 C667.7,356.6 675.7,355.4 684.0,354.6 C692.3,353.8 700.7,353.1 710.0,352.5 C719.3,351.9 731.7,351.3 740.0,350.7 C748.3,350.1 753.7,349.4 760.0,349.0 C766.3,348.6 771.3,348.4 778.0,348.4 C784.7,348.4 793.5,348.6 800.0,349.0 C806.5,349.4 811.5,349.9 817.0,350.7 C822.5,351.4 827.8,352.5 833.0,353.5 C838.2,354.5 843.5,355.7 848.0,356.9 C852.5,358.1 856.2,359.2 860.0,360.5 C863.8,361.8 866.4,362.8 871.0,364.6 C875.6,366.4 884.8,370.4 887.5,371.5 L888.3,394.2 C887.8,394.1 887.9,394.9 885.0,393.8 C882.1,392.7 875.2,389.4 871.0,387.6 C866.8,385.8 863.8,384.6 860.0,383.2 C856.2,381.8 852.5,380.5 848.0,379.2 C843.5,377.9 838.2,376.3 833.0,375.2 C827.8,374.1 824.3,373.1 817.0,372.3 C809.7,371.6 797.7,371.0 789.0,370.7 C780.3,370.4 773.2,370.4 765.0,370.6 C756.8,370.8 748.8,371.1 740.0,371.8 C731.2,372.5 721.3,373.9 712.0,375.0 C702.7,376.1 692.7,377.4 684.0,378.4 C675.3,379.4 667.7,380.1 660.0,381.0 C652.3,381.9 645.5,383.0 638.0,383.8 C630.5,384.6 622.7,385.4 615.0,386.0 C607.3,386.6 599.5,387.3 592.0,387.6 C584.5,387.9 577.7,387.9 570.0,387.6 C562.3,387.4 553.5,386.7 546.0,386.1 C538.5,385.5 532.7,384.8 525.0,384.1 C517.3,383.4 510.8,382.5 500.0,381.8 C489.2,381.1 473.4,380.3 460.0,380.1 C446.6,379.9 433.0,380.0 419.5,380.8 C406.0,381.6 392.4,383.0 379.0,384.8 C365.6,386.6 351.3,389.6 338.8,391.5 C326.3,393.4 309.6,395.4 303.8,396.2 Z" fill="url(#gp)" stroke="#4f4f48" stroke-width="0.6" stroke-linejoin="round" />
<polyline points="885.4,370.6 885.8,394.0" fill="none" stroke="#4f4f48" stroke-width="0.5" stroke-linecap="round" stroke-linejoin="round" />
<polygon points="888.3,384.0 893.0,388.5 899.0,396.5 903.7,405.3 911.0,423.0 911.5,516.8 906.9,518.3 898.0,506.0 890.0,493.7 889.0,470.0" fill="#d6d3c7" stroke="#4f4f48" stroke-width="0.5" stroke-linejoin="round" />
<polyline points="890.0,388.0 891.5,495.0" fill="none" stroke="#4f4f48" stroke-width="0.5" stroke-linecap="round" stroke-linejoin="round" />
<polyline points="894.6,392.0 895.5,500.0" fill="none" stroke="#4f4f48" stroke-width="0.5" stroke-linecap="round" stroke-linejoin="round" />
<polyline points="900.0,398.0 901.0,509.0" fill="none" stroke="#4f4f48" stroke-width="0.5" stroke-linecap="round" stroke-linejoin="round" />
<polyline points="906.9,412.0 907.6,518.0" fill="none" stroke="#4f4f48" stroke-width="0.5" stroke-linecap="round" stroke-linejoin="round" />
<polygon points="890.0,388.0 894.6,392.0 895.5,500.0 891.5,495.0" fill="#cfccc0" stroke="#4f4f48" stroke-width="0.4" stroke-linejoin="round" />
<polygon points="911.5,420.0 921.5,427.0 921.5,472.2 911.5,466.8" fill="#ffffff" stroke="#4f4f48" stroke-width="0.4" stroke-linejoin="round" />
<polygon points="921.5,425.0 932.2,431.0 933.8,483.7 923.0,476.8" fill="#dddbcf" stroke="#4f4f48" stroke-width="0.5" stroke-linejoin="round" />
<polygon points="932.2,431.0 936.0,433.0 936.0,483.7 933.8,483.7" fill="#e2e0d5" stroke="#4f4f48" stroke-width="0.4" stroke-linejoin="round" />
<polygon points="936.0,433.0 949.9,442.0 949.9,490.0 936.0,482.0" fill="#d1cec2" stroke="#4f4f48" stroke-width="0.4" stroke-linejoin="round" />
<polygon points="949.9,442.0 984.5,458.0 984.5,518.3 950.7,496.8" fill="#d6d3c7" stroke="#4f4f48" stroke-width="0.5" stroke-linejoin="round" />
<polyline points="913.5,506.5 950.0,498.6" fill="none" stroke="#54544d" stroke-width="2.0" stroke-linecap="round" stroke-linejoin="round" />
<polyline points="922.5,526.2 984.0,514.5" fill="none" stroke="#54544d" stroke-width="2.0" stroke-linecap="round" stroke-linejoin="round" />
<polyline points="948.0,543.0 984.0,536.5" fill="none" stroke="#54544d" stroke-width="2.0" stroke-linecap="round" stroke-linejoin="round" />
<polyline points="973.5,562.5 984.0,560.0" fill="none" stroke="#54544d" stroke-width="2.0" stroke-linecap="round" stroke-linejoin="round" />
<polygon points="984.5,458.4 1051.3,492.2 1057.6,495.5 1057.6,611.5 1054.2,609.4 1035.4,596.6 1003.8,577.1 984.3,567.7" fill="#d6d3c7" stroke="#4f4f48" stroke-width="0.6" stroke-linejoin="round" />
<polyline points="999.1,465.8 999.1,574.8" fill="none" stroke="#4f4f48" stroke-width="0.5" stroke-linecap="round" stroke-linejoin="round" />
<polyline points="1013.7,473.2 1013.9,583.3" fill="none" stroke="#4f4f48" stroke-width="0.5" stroke-linecap="round" stroke-linejoin="round" />
<polyline points="1029.0,480.9 1028.7,592.5" fill="none" stroke="#4f4f48" stroke-width="0.5" stroke-linecap="round" stroke-linejoin="round" />
<polyline points="1042.1,487.5 1042.1,601.2" fill="none" stroke="#4f4f48" stroke-width="0.5" stroke-linecap="round" stroke-linejoin="round" />
<polyline points="1051.3,492.2 1054.2,609.4" fill="none" stroke="#4f4f48" stroke-width="0.5" stroke-linecap="round" stroke-linejoin="round" />
<polygon points="984.5,455.3 1051.3,489.1 1051.3,492.2 984.5,458.4" fill="#adaba3" stroke="#4f4f48" stroke-width="0.4" stroke-linejoin="round" />
<polygon points="1067.6,500.0 1083.8,508.0 1083.8,571.8 1067.6,571.8" fill="#d6d3c7" stroke="#4f4f48" stroke-width="0.4" stroke-linejoin="round" />
<polygon points="1057.6,495.5 1063.6,498.0 1063.6,573.8 1057.6,573.8" fill="#dddbcf" stroke="#4f4f48" stroke-width="0.4" stroke-linejoin="round" />
<polygon points="1063.6,498.0 1067.6,500.0 1067.0,576.5 1063.6,576.5" fill="#e2e0d5" stroke="#4f4f48" stroke-width="0.4" stroke-linejoin="round" />
<polygon points="1067.6,500.0 1100.0,520.0 1100.0,548.0 1083.8,540.0" fill="#d6d3c7" stroke="#4f4f48" stroke-width="0" stroke-linejoin="round" />
<polygon points="1083.8,525.0 1086.9,527.0 1086.9,591.3 1083.8,591.3" fill="#e2e0d5" stroke="#4f4f48" stroke-width="0.4" stroke-linejoin="round" />
<polyline points="1057.6,589.7 1086.0,584.0" fill="none" stroke="#54544d" stroke-width="2.0" stroke-linecap="round" stroke-linejoin="round" />
<polyline points="1063.7,613.9 1086.2,608.7" fill="none" stroke="#54544d" stroke-width="2.0" stroke-linecap="round" stroke-linejoin="round" />
<polygon points="888.3,383.8 930.5,377.5 1083.8,350.5 1579.1,623.4 1428.8,663.0 1276.9,570.0 1173.0,592.0 1107.0,547.0 1051.3,489.1 984.5,455.3 921.0,428.0 903.7,405.3 899.0,396.5 893.0,388.5" fill="#bcb9ad" stroke="#4f4f48" stroke-width="0.6" stroke-linejoin="round" />
<polyline points="936.0,415.0 1130.0,377.2" fill="none" stroke="#4f4f48" stroke-width="0.55" stroke-linecap="round" stroke-linejoin="round" />
<polyline points="985.0,446.0 1183.0,406.6" fill="none" stroke="#4f4f48" stroke-width="0.55" stroke-linecap="round" stroke-linejoin="round" />
<polyline points="1052.0,478.5 1240.0,438.8" fill="none" stroke="#4f4f48" stroke-width="0.55" stroke-linecap="round" stroke-linejoin="round" />
<polyline points="1098.0,516.0 1302.0,472.0" fill="none" stroke="#4f4f48" stroke-width="0.55" stroke-linecap="round" stroke-linejoin="round" />
<polyline points="1131.0,562.0 1367.0,509.8" fill="none" stroke="#4f4f48" stroke-width="0.55" stroke-linecap="round" stroke-linejoin="round" />
<polyline points="1299.0,581.5 1439.0,547.5" fill="none" stroke="#4f4f48" stroke-width="0.55" stroke-linecap="round" stroke-linejoin="round" />
<polyline points="1373.0,626.8 1518.0,589.6" fill="none" stroke="#4f4f48" stroke-width="0.55" stroke-linecap="round" stroke-linejoin="round" />
<polygon points="928.9,363.6 1082.7,336.1 1083.8,350.5 930.0,377.8" fill="#94ac8d" stroke="#4f4f48" stroke-width="0.6" stroke-linejoin="round" />
<polyline points="930.0,365.0 1082.7,337.4" fill="none" stroke="#4f4f48" stroke-width="0.4" stroke-linecap="round" stroke-linejoin="round" />
<polygon points="1082.7,336.1 1606.8,618.8 1579.1,623.4 1083.8,350.5" fill="#94ac8d" stroke="#4f4f48" stroke-width="0.6" stroke-linejoin="round" />
<polyline points="1084.2,338.0 1602.2,618.4" fill="none" stroke="#4f4f48" stroke-width="0.4" stroke-linecap="round" stroke-linejoin="round" />
<path d="M903.7,394.5 C907.2,396.8 919.3,404.9 924.4,408.4 C929.5,411.9 929.4,412.3 934.5,415.4 C939.6,418.5 950.5,424.4 955.1,426.8 C959.7,429.2 957.3,427.5 962.2,429.6 C967.1,431.7 980.8,437.6 984.5,439.2 L984.5,463.5 C983.9,463.3 984.3,463.9 980.6,462.2 C976.9,460.4 966.5,455.1 962.2,453.0 C958.0,450.9 960.2,452.8 955.1,449.9 C950.0,446.9 936.6,438.4 931.5,435.3 C926.4,432.2 929.0,434.7 924.4,431.4 C919.8,428.1 907.2,418.0 903.7,415.3 Z" fill="#94ac8d" stroke="#4f4f48" stroke-width="0.6" stroke-linejoin="round" />
<polyline points="982.0,438.2 982.0,462.8" fill="none" stroke="#4f4f48" stroke-width="0.5" stroke-linecap="round" stroke-linejoin="round" />
<path d="M1051.5,478.5 C1054.7,480.9 1064.2,487.5 1070.7,493.0 C1077.2,498.5 1084.6,505.7 1090.7,511.5 C1096.8,517.3 1104.8,524.9 1107.6,527.6 L1107.6,546.1 C1107.0,546.1 1107.4,548.8 1103.8,546.1 C1100.2,543.4 1091.6,534.9 1086.1,529.9 C1080.6,524.9 1076.6,520.6 1070.7,516.1 C1064.8,511.6 1054.1,505.2 1050.8,503.0 Z" fill="#94ac8d" stroke="#4f4f48" stroke-width="0.6" stroke-linejoin="round" />
<polyline points="1104.8,525.5 1104.8,546.1" fill="none" stroke="#4f4f48" stroke-width="0.5" stroke-linecap="round" stroke-linejoin="round" />
<polygon points="1086.9,558.4 1171.1,614.6 1168.3,737.5 1085.4,676.8" fill="#d2cfc3" stroke="#4f4f48" stroke-width="0.6" stroke-linejoin="round" />
<polygon points="1085.4,676.8 1168.3,737.5 1168.3,745.2 1085.4,682.2" fill="#adaba3" stroke="#4f4f48" stroke-width="0.6" stroke-linejoin="round" />
<polyline points="1106.9,692.5 1106.9,698.0" fill="none" stroke="#4f4f48" stroke-width="0.5" stroke-linecap="round" stroke-linejoin="round" />
<polyline points="1136.8,714.5 1136.8,720.0" fill="none" stroke="#4f4f48" stroke-width="0.5" stroke-linecap="round" stroke-linejoin="round" />
<polygon points="1171.1,614.6 1272.6,590.4 1267.4,712.2 1168.3,737.5" fill="#dedcd0" stroke="#4f4f48" stroke-width="0.6" stroke-linejoin="round" />
<polyline points="1174.5,613.8 1172.9,736.3" fill="none" stroke="#4f4f48" stroke-width="0.5" stroke-linecap="round" stroke-linejoin="round" />
<polyline points="1179.1,613.8 1179.1,734.4" fill="none" stroke="#4f4f48" stroke-width="0.5" stroke-linecap="round" stroke-linejoin="round" />
<polygon points="1182.2,618.4 1256.7,601.5 1256.7,608.4 1182.2,626.1" fill="#e1dfd4" stroke="#4f4f48" stroke-width="0.4" stroke-linejoin="round" />
<polygon points="1182.2,626.1 1256.7,608.4 1255.9,623.0 1182.2,640.7" fill="#c6c3b8" stroke="#4f4f48" stroke-width="0.4" stroke-linejoin="round" />
<polygon points="1182.2,643.8 1255.9,626.1 1255.2,653.0 1181.4,671.4" fill="#c6c3b8" stroke="#4f4f48" stroke-width="0.4" stroke-linejoin="round" />
<polygon points="1181.4,673.7 1255.2,655.3 1255.9,676.1 1180.6,694.5" fill="#c6c3b8" stroke="#4f4f48" stroke-width="0.4" stroke-linejoin="round" />
<polygon points="1182.2,640.7 1255.9,623.0 1255.9,626.1 1182.2,643.8" fill="#5e5d56" stroke="#4f4f48" stroke-width="0.3" stroke-linejoin="round" />
<polygon points="1181.4,671.4 1255.2,653.0 1255.2,655.3 1181.4,673.7" fill="#5e5d56" stroke="#4f4f48" stroke-width="0.3" stroke-linejoin="round" />
<polygon points="1180.6,694.5 1255.9,676.1 1255.9,678.4 1180.6,696.8" fill="#dad8cc" stroke="#4f4f48" stroke-width="0.3" stroke-linejoin="round" />
<polygon points="1180.6,696.8 1255.9,678.4 1255.2,714.5 1179.1,734.4" fill="#c3a9a0" stroke="#4f4f48" stroke-width="0.5" stroke-linejoin="round" />
<polyline points="1182.2,618.4 1179.1,734.4" fill="none" stroke="#4f4f48" stroke-width="0.5" stroke-linecap="round" stroke-linejoin="round" />
<polyline points="1256.7,601.0 1255.2,714.5" fill="none" stroke="#4f4f48" stroke-width="0.5" stroke-linecap="round" stroke-linejoin="round" />
<polyline points="1257.9,600.5 1256.6,714.2" fill="none" stroke="#4f4f48" stroke-width="0.4" stroke-linecap="round" stroke-linejoin="round" />
<polygon points="1179.6,613.8 1262.6,593.8 1261.4,599.2 1179.2,618.8" fill="#c3a9a0" stroke="#4f4f48" stroke-width="0.5" stroke-linejoin="round" />
<polygon points="1168.3,737.5 1267.4,712.2 1267.4,719.1 1169.1,745.2" fill="#adaba3" stroke="#4f4f48" stroke-width="0.6" stroke-linejoin="round" />
<polygon points="1086.9,554.5 1170.7,610.3 1171.1,614.6 1086.9,558.4" fill="#adaba3" stroke="#4f4f48" stroke-width="0.4" stroke-linejoin="round" />
<polygon points="1086.9,536.8 1170.4,593.0 1170.7,610.3 1086.9,554.5" fill="#94ac8d" stroke="#4f4f48" stroke-width="0.6" stroke-linejoin="round" />
<polygon points="1086.9,536.8 1089.0,535.6 1173.0,591.9 1170.4,593.0" fill="#a0b79a" stroke="#4f4f48" stroke-width="0.4" stroke-linejoin="round" />
<polygon points="1175.4,609.2 1272.9,586.9 1272.6,590.4 1175.4,613.0" fill="#adaba3" stroke="#4f4f48" stroke-width="0.4" stroke-linejoin="round" />
<polygon points="1175.4,593.0 1273.3,570.0 1272.9,586.9 1175.4,609.2" fill="#94ac8d" stroke="#4f4f48" stroke-width="0.6" stroke-linejoin="round" />
<polygon points="1173.0,591.9 1271.4,568.8 1273.3,570.0 1175.4,593.0" fill="#a0b79a" stroke="#4f4f48" stroke-width="0.4" stroke-linejoin="round" />
<polygon points="1170.4,593.0 1173.0,592.2 1175.4,593.0 1175.4,613.0 1171.1,614.6 1170.7,610.3" fill="#7f977a" stroke="#4f4f48" stroke-width="0.5" stroke-linejoin="round" />
<polygon points="1272.8,590.4 1427.7,687.2 1417.1,817.8 1267.4,712.2" fill="#d2cfc3" stroke="#4f4f48" stroke-width="0.6" stroke-linejoin="round" />
<polygon points="1267.4,712.2 1417.1,817.8 1417.1,825.4 1267.4,719.1" fill="#adaba3" stroke="#4f4f48" stroke-width="0.6" stroke-linejoin="round" />
<polyline points="1303.2,737.5 1303.2,744.0" fill="none" stroke="#4f4f48" stroke-width="0.5" stroke-linecap="round" stroke-linejoin="round" />
<polyline points="1339.5,763.0 1339.5,769.5" fill="none" stroke="#4f4f48" stroke-width="0.5" stroke-linecap="round" stroke-linejoin="round" />
<polyline points="1375.7,788.6 1375.7,795.1" fill="none" stroke="#4f4f48" stroke-width="0.5" stroke-linecap="round" stroke-linejoin="round" />
<polygon points="1400.7,678.4 1418.0,689.0 1410.4,768.8 1395.9,760.1" fill="#e2e0d5" stroke="#4f4f48" stroke-width="0.5" stroke-linejoin="round" />
<polygon points="1404.6,682.0 1411.3,686.0 1406.5,766.0 1400.6,762.5" fill="#c9c6bb" stroke="#4f4f48" stroke-width="0.4" stroke-linejoin="round" />
<polyline points="1403.3,708.2 1409.6,711.8" fill="none" stroke="#5e5d56" stroke-width="1.4" stroke-linecap="round" stroke-linejoin="round" />
<polyline points="1401.8,742.8 1407.8,746.4" fill="none" stroke="#5e5d56" stroke-width="1.4" stroke-linecap="round" stroke-linejoin="round" />
<polyline points="1414.3,687.0 1408.6,767.6" fill="none" stroke="#4f4f48" stroke-width="0.4" stroke-linecap="round" stroke-linejoin="round" />
<polygon points="1395.9,760.1 1410.4,768.8 1408.4,809.1 1393.1,799.5" fill="#c3a9a0" stroke="#4f4f48" stroke-width="0.5" stroke-linejoin="round" />
<polygon points="1399.8,672.2 1419.2,684.9 1418.8,689.6 1400.4,678.2" fill="#c3a9a0" stroke="#4f4f48" stroke-width="0.5" stroke-linejoin="round" />
<polyline points="1423.8,686.0 1412.5,814.6" fill="none" stroke="#4f4f48" stroke-width="0.4" stroke-linecap="round" stroke-linejoin="round" />
<polygon points="1427.7,687.2 1605.1,639.5 1592.0,767.8 1417.1,817.8" fill="#d3d0c4" stroke="#4f4f48" stroke-width="0.6" stroke-linejoin="round" />
<polyline points="1431.5,686.1 1421.9,816.4" fill="none" stroke="#4f4f48" stroke-width="0.5" stroke-linecap="round" stroke-linejoin="round" />
<polygon points="1481.5,679.4 1511.2,671.7 1508.4,716.9 1477.6,724.6" fill="#dcdace" stroke="#4f4f48" stroke-width="0.4" stroke-linejoin="round" />
<polygon points="1511.2,671.7 1530.5,666.5 1523.7,728.4 1508.4,716.9" fill="#d6d3c7" stroke="#4f4f48" stroke-width="0.4" stroke-linejoin="round" />
<polygon points="1477.6,724.6 1508.4,716.9 1523.7,728.4 1522.8,747.6 1474.7,759.1" fill="#c3c0b5" stroke="#4f4f48" stroke-width="0.4" stroke-linejoin="round" />
<polygon points="1474.7,759.1 1522.8,747.6 1522.8,750.5 1474.7,762.0" fill="#5e5d56" stroke="#4f4f48" stroke-width="0.3" stroke-linejoin="round" />
<polygon points="1474.7,762.0 1522.8,750.5 1520.9,786.0 1470.9,800.5" fill="#bebbb0" stroke="#4f4f48" stroke-width="0.4" stroke-linejoin="round" />
<polyline points="1477.6,724.6 1508.4,716.9" fill="none" stroke="#45453f" stroke-width="1.0" stroke-linecap="round" stroke-linejoin="round" />
<polyline points="1481.5,679.4 1470.9,800.5" fill="none" stroke="#4f4f48" stroke-width="0.5" stroke-linecap="round" stroke-linejoin="round" />
<polygon points="1530.5,666.0 1534.3,665.0 1523.7,785.1 1520.9,786.0" fill="#e2e0d5" stroke="#4f4f48" stroke-width="0.5" stroke-linejoin="round" />
<polygon points="1479.5,672.7 1536.2,658.3 1535.3,665.0 1480.5,679.4" fill="#c3a9a0" stroke="#4f4f48" stroke-width="0.5" stroke-linejoin="round" />
<polygon points="1590.0,745.7 1593.0,745.0 1592.2,764.0 1589.2,764.6" fill="#c3a9a0" stroke="#4f4f48" stroke-width="0.4" stroke-linejoin="round" />
<polygon points="1601.5,640.5 1604.8,639.7 1604.2,645.6 1601.2,646.3" fill="#c3a9a0" stroke="#4f4f48" stroke-width="0.4" stroke-linejoin="round" />
<polygon points="1417.1,817.8 1592.0,767.8 1592.0,774.5 1417.1,825.4" fill="#adaba3" stroke="#4f4f48" stroke-width="0.6" stroke-linejoin="round" />
<polygon points="1273.7,586.9 1427.7,683.0 1427.7,687.2 1273.7,590.4" fill="#adaba3" stroke="#4f4f48" stroke-width="0.4" stroke-linejoin="round" />
<polygon points="1273.3,570.0 1427.7,664.2 1427.7,683.0 1273.7,586.9" fill="#94ac8d" stroke="#4f4f48" stroke-width="0.6" stroke-linejoin="round" />
<polygon points="1273.3,570.0 1276.0,569.2 1428.8,663.0 1427.7,664.2" fill="#a0b79a" stroke="#4f4f48" stroke-width="0.4" stroke-linejoin="round" />
<polygon points="1431.5,682.3 1606.2,636.1 1605.1,639.5 1431.5,686.1" fill="#adaba3" stroke="#4f4f48" stroke-width="0.4" stroke-linejoin="round" />
<polygon points="1431.9,665.3 1606.8,618.8 1606.2,636.1 1431.5,682.3" fill="#94ac8d" stroke="#4f4f48" stroke-width="0.6" stroke-linejoin="round" />
<polygon points="1428.8,663.0 1579.1,623.4 1606.8,618.8 1431.9,665.3" fill="#a0b79a" stroke="#4f4f48" stroke-width="0.4" stroke-linejoin="round" />
<polyline points="1428.8,663.0 1602.2,618.4" fill="none" stroke="#4f4f48" stroke-width="0.4" stroke-linecap="round" stroke-linejoin="round" />
<polygon points="1425.7,663.6 1427.7,664.2 1431.9,665.3 1431.5,686.1 1427.7,687.2 1425.7,685.0" fill="#7f977a" stroke="#4f4f48" stroke-width="0.5" stroke-linejoin="round" />
<polyline points="1428.5,664.5 1428.3,686.6" fill="none" stroke="#4f4f48" stroke-width="0.4" stroke-linecap="round" stroke-linejoin="round" />
</svg>

<!-- ======= VIEWCUBE ======= -->
<svg id="cube" width="1920" height="1041" viewBox="0 0 1920 1041">
<defs>
<linearGradient id="cf" x1="0" x2="0" y1="0" y2="1"><stop offset="0" stop-color="#ededed"/><stop offset="1" stop-color="#e6e6e6"/></linearGradient>
<radialGradient id="csh" cx="0.5" cy="0.5" r="0.5"><stop offset="0" stop-color="#000" stop-opacity="0.16"/><stop offset="1" stop-color="#000" stop-opacity="0"/></radialGradient>
<filter id="blur1"><feGaussianBlur stdDeviation="0.5"/></filter>
</defs>
<ellipse cx="1870" cy="151" rx="34" ry="7" fill="url(#csh)"/>
<polygon points="1889.6,109 1894,112 1893,150 1889.6,147.6" fill="#000" opacity="0.05"/>
<g filter="url(#blur1)">
<polygon points="1848.6,96.9 1887.8,96.9 1890.1,109 1846.9,109.6" fill="#f1f1f1"/>
<polygon points="1846.9,109.6 1890.1,109 1889.6,147.6 1848,148.2" fill="url(#cf)"/>
<rect x="1855" y="112.5" width="27" height="3.6" fill="#dedede" opacity="0.7"/>
<path d="M1846.9,109.6 L1890.1,109" stroke="#dcdcdc" stroke-width="0.7"/>
</g>
<text x="1853.2" y="133.8" font-family="Liberation Sans, sans-serif" font-weight="bold" font-size="10.4" fill="#8b8b8b" textLength="30" lengthAdjust="spacingAndGlyphs">FRONT</text>
<text transform="translate(1861.9,104.4) scale(1,0.42)" font-family="Liberation Sans, sans-serif" font-weight="bold" font-size="9" fill="#9a9a9a" textLength="16" lengthAdjust="spacingAndGlyphs">TOP</text>
<path d="M1844.6,102.7 L1847.5,148.8" stroke="#8080c8" stroke-width="0.9" fill="none"/>
<path d="M1847.5,148.9 L1895.3,149.4" stroke="#dca4a4" stroke-width="0.9" fill="none"/>
<text x="1840.4" y="100.4" font-family="Liberation Sans, sans-serif" font-size="12.6" font-weight="bold" fill="#7878ba" textLength="6.6" lengthAdjust="spacingAndGlyphs">Z</text>
<text x="1899.2" y="154" font-family="Liberation Sans, sans-serif" font-size="12.4" font-weight="bold" fill="#d67878" textLength="6.2" lengthAdjust="spacingAndGlyphs">X</text>

</svg>

<!-- ======= BOTTOM ======= -->
<div class="abs" style="left:440px;top:1010px;width:1140px;height:31px;background:linear-gradient(to bottom,rgba(0,0,0,0) 0%,rgba(0,0,0,0.02) 50%,rgba(0,0,0,0.06) 100%);-webkit-mask-image:linear-gradient(to right,transparent 0,#000 70px,#000 1070px,transparent 1140px);mask-image:linear-gradient(to right,transparent 0,#000 70px,#000 1070px,transparent 1140px)"></div>
<div id="commentsbar" class="abs"></div>
<div class="t sx" style="transform:scaleX(0.9619);left:20.8px;top:1025.2px;font-size:9px;color:#555">COMMENTS</div>
<div id="navbar" class="abs"></div>
<svg id="navicons" width="1920" height="1041" viewBox="0 0 1920 1041">
<g stroke-linecap="round" stroke-linejoin="round">
<!-- comments header icons -->
<rect x="230.6" y="1025.6" width="6.8" height="6.8" rx="2.4" fill="#1e1e1e"/><path d="M232.2,1029 h3.6 M234,1027.2 v3.6" stroke="#fff" stroke-width="0.8"/>
<rect x="243.2" y="1020" width="4" height="19" fill="#f6f6f6"/><path d="M243.6,1024.5 L246.6,1029 L243.6,1033.5 Z" fill="#c9c9c9"/><path d="M247.2,1020 V1039" stroke="#dcdcdc" stroke-width="0.6"/>
<!-- orbit -->
<g fill="none" stroke="#555" stroke-width="0.9"><ellipse cx="870.6" cy="1028.8" rx="6" ry="3"/><ellipse cx="870.6" cy="1028.8" rx="3" ry="6"/></g><circle cx="870.6" cy="1028.8" r="0.9" fill="#444"/><path d="M874.5,1026 l1.8,0.3 l-0.6,1.6" fill="none" stroke="#444" stroke-width="0.8"/>
<!-- look at -->
<path d="M892.2,1034.7 V1027.5 H894.5 V1025.5 L897,1024 H900 V1026.3 H903.5 V1034.7 Z" fill="#b8b8b8" stroke="#7a7a7a" stroke-width="0.8"/><path d="M893.5,1029.5 H902.3 M893.5,1031.5 H902.3" stroke="#7a7a7a" stroke-width="0.7"/>
<!-- hand -->
<path d="M916.5,1035 C914.5,1033 913.5,1031 913.5,1029.5 L915,1029.3 L916.3,1031 V1025.5 C916.3,1024.3 917.8,1024.3 917.8,1025.5 V1024.4 C917.8,1023.2 919.4,1023.2 919.4,1024.4 V1024.7 C919.4,1023.6 921,1023.6 921,1024.7 V1025.6 C921,1024.6 922.5,1024.6 922.5,1025.6 V1031.5 C922.5,1033 922,1034 921.2,1035 Z" fill="#fafafa" stroke="#555" stroke-width="0.8"/>
<!-- zoom + -->
<circle cx="939.3" cy="1028" r="4" fill="#fbfbfb" stroke="#666" stroke-width="0.9"/><path d="M942.3,1031 L946.6,1035" stroke="#444" stroke-width="1.6"/><path d="M944.6,1024.3 h2.4 M945.8,1023.1 v2.4" stroke="#555" stroke-width="0.7"/>
<!-- zoom window -->
<circle cx="960.6" cy="1028" r="4" fill="#fbfbfb" stroke="#666" stroke-width="0.9"/><rect x="958.6" y="1026" width="4" height="4" fill="none" stroke="#888" stroke-width="0.6"/><path d="M963.6,1031 L967.6,1035" stroke="#444" stroke-width="1.6"/>
<!-- display -->
<rect x="983.3" y="1023.6" width="12.6" height="9" fill="#86abdc" stroke="#6b7f99" stroke-width="0.8"/><path d="M987.5,1033 L986.5,1035.3 H992.8 L991.8,1033 Z" fill="#9a9a9a"/>
<!-- grid -->
<rect x="1008.3" y="1023.4" width="12.2" height="12" fill="#a8a8a8" stroke="#7d7d7d" stroke-width="0.6"/><path d="M1011.3,1023.4 v12 M1014.4,1023.4 v12 M1017.5,1023.4 v12 M1008.3,1026.4 h12.2 M1008.3,1029.4 h12.2 M1008.3,1032.4 h12.2" stroke="#d0d0d0" stroke-width="0.5"/>
<!-- viewports -->
<rect x="1033.8" y="1023.8" width="12.4" height="11.2" fill="#7da4d8" stroke="#5d7fb0" stroke-width="0.8"/><path d="M1040,1023.8 v11.2 M1033.8,1029.4 h12.4" stroke="#5d7fb0" stroke-width="0.8"/>
<g fill="#222"><polygon points="881.4,1027.4 885.6,1027.4 883.5,1030.2"/><polygon points="972.9,1027.4 977.1,1027.4 975,1030.2"/><polygon points="998.1,1027.4 1002.3,1027.4 1000.2,1030.2"/><polygon points="1023.8,1027.4 1028,1027.4 1025.9,1030.2"/><polygon points="1049.1,1027.4 1053.3,1027.4 1051.2,1030.2"/></g>
</g>

</svg>
<div id="wm" class="t">www.mfgrobots.com</div>

</div>
</body>
</html>
